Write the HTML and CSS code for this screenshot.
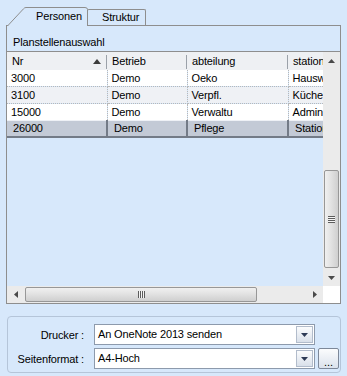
FILE: index.html
```html
<html>

<head>
  <title>Planstellenauswahl</title>
  <link rel="stylesheet" href="styles.css">
</head>

<body>

  <div class="tabs">
    <div class="tab active">
      <svg class="tab-shape" width="81" height="19" viewBox="0 0 81 19">
        <path d="M0.5,19 L16.5,1.8 Q17.5,0.5 19,0.5 L78,0.5 Q80.5,0.5 80.5,2.5 L80.5,19" fill="#d7e8fb" stroke="#8e8e8e"/>
      </svg>
      <span>Personen</span>
    </div>
    <div class="tab">Struktur</div>
  </div>

  <div class="panel">
    <div class="caption">Planstellenauswahl</div>
    <div class="grid">
      <div class="body">
        <table>
          <colgroup>
            <col style="width: 100px">
            <col style="width: 80px">
            <col style="width: 101px">
            <col style="width: 60px">
          </colgroup>
          <thead>
            <tr>
              <th>Nr
                <svg class="sort" width="8" height="5" viewBox="0 0 8 5"><path d="M0,5 L4,0 L8,5 Z" fill="#3c3c3c"/></svg>
              </th>
              <th>Betrieb</th>
              <th>abteilung</th>
              <th>station</th>
            </tr>
          </thead>
          <tbody>
            <tr><td>3000</td><td>Demo</td><td>Oeko</td><td>Hausw</td></tr>
            <tr class="alt"><td>3100</td><td>Demo</td><td>Verpfl.</td><td>Küche</td></tr>
            <tr><td>15000</td><td>Demo</td><td>Verwaltu</td><td>Admin</td></tr>
            <tr class="selected"><td>26000</td><td>Demo</td><td>Pflege</td><td>Station</td></tr>
          </tbody>
        </table>
      </div>

      <div class="vscroll">
        <div class="arrow">
          <svg width="7" height="4" viewBox="0 0 7 4"><path d="M0,4 L3.5,0 L7,4 Z" fill="#4a4a4a"/></svg>
        </div>
        <div class="vtrack">
          <div class="vthumb"><span class="grip-h"></span></div>
        </div>
        <div class="arrow">
          <svg width="7" height="4" viewBox="0 0 7 4"><path d="M0,0 L3.5,4 L7,0 Z" fill="#4a4a4a"/></svg>
        </div>
      </div>

      <div class="hscroll">
        <div class="arrow">
          <svg width="4" height="7" viewBox="0 0 4 7"><path d="M4,0 L0,3.5 L4,7 Z" fill="#4a4a4a"/></svg>
        </div>
        <div class="htrack">
          <div class="hthumb"><span class="grip-v"></span></div>
        </div>
        <div class="arrow">
          <svg width="4" height="7" viewBox="0 0 4 7"><path d="M0,0 L4,3.5 L0,7 Z" fill="#4a4a4a"/></svg>
        </div>
      </div>

      <div class="corner"></div>
    </div>
  </div>

  <div class="group">
    <div class="field">
      <label>Drucker :</label>
      <div class="combo">
        <span class="value">An OneNote 2013 senden</span>
        <span class="drop"><svg width="7" height="4" viewBox="0 0 7 4"><path d="M0,0 L3.5,4 L7,0 Z" fill="#2d3a55"/></svg></span>
      </div>
    </div>
    <div class="field">
      <label>Seitenformat :</label>
      <div class="combo">
        <span class="value">A4-Hoch</span>
        <span class="drop"><svg width="7" height="4" viewBox="0 0 7 4"><path d="M0,0 L3.5,4 L7,0 Z" fill="#2d3a55"/></svg></span>
      </div>
      <button class="more">...</button>
    </div>
  </div>

</body>

</html>
```

FILE: styles.css
```css
body {
  margin: 0;
  background-color: #d7e8fb;
  font-family: "Liberation Sans", Arial, sans-serif;
  font-size: 11px;
  letter-spacing: -0.15px;
  color: #000;
}

.tabs {
  display: flex;
  align-items: flex-end;
  padding-top: 7px;
  margin-bottom: -1px;
}

.tab {
  position: relative;
  box-sizing: border-box;
  height: 16px;
  width: 59px;
  margin-left: -1px;
  margin-bottom: 1px;
  padding-left: 14px;
  line-height: 15px;
  border: 1px solid #8e8e8e;
  border-bottom: none;
  border-radius: 2px 2px 0 0;
}

.tab.active {
  width: 81px;
  height: 19px;
  margin-left: 7px;
  margin-bottom: 0;
  padding-left: 29px;
  padding-top: 2px;
  line-height: 14px;
  border: none;
  z-index: 1;
}

.tab-shape {
  position: absolute;
  left: 0;
  top: 0;
}

.tab span {
  position: relative;
}

.panel {
  margin: 0 6px;
  border: 1px solid #8e8e8e;
}

.caption {
  height: 25px;
  box-sizing: border-box;
  padding: 8px 0 0 6px;
  line-height: 16px;
}

.grid {
  display: grid;
  grid-template-columns: 316px 17px;
  grid-template-rows: 234px 17px;
  border-top: 1px solid #8e8e8e;
}

.body {
  overflow: hidden;
}

table {
  border-collapse: collapse;
  table-layout: fixed;
  width: 341px;
  font: inherit;
  letter-spacing: inherit;
}

th {
  height: 18px;
  padding: 1px 0 0 5px;
  text-align: left;
  font-weight: normal;
  line-height: 17px;
  white-space: nowrap;
  overflow: hidden;
  background: linear-gradient(#9ba1a9, #9ba1a9) right 0 bottom 1px / 1px 14px no-repeat, #eef0f3;
}

.sort {
  float: right;
  margin: 6px 6px 0 0;
}

td {
  height: 16px;
  padding: 0 0 0 4px;
  line-height: 16px;
  white-space: nowrap;
  overflow: hidden;
  background-color: #fff;
  border-bottom: 1px dotted #b8b8b8;
  border-right: 1px dotted #b8b8b8;
}

.alt td {
  background-color: #eff1f5;
}

.selected td {
  height: 15px;
  line-height: 15px;
  padding-left: 6px;
  background-color: #c3cad6;
  border-top: 1px solid #eef1f6;
  border-bottom: 2px solid #737b87;
  border-right: 2px solid #737b87;
}

.vscroll {
  display: flex;
  flex-direction: column;
  background-color: #ebebeb;
}

.arrow {
  display: flex;
  align-items: center;
  justify-content: center;
  flex: 0 0 17px;
  height: 17px;
}

.vtrack {
  flex: 1;
  padding-top: 101px;
}

.vthumb {
  box-sizing: border-box;
  height: 98px;
  margin: 0 1px;
  border: 1px solid #979797;
  border-radius: 2px;
  background: linear-gradient(to right, #f0f0f0, #e2e2e2 45%, #cfcfcf);
  display: flex;
  align-items: center;
  justify-content: center;
}

.grip-h {
  width: 7px;
  height: 7px;
  background: repeating-linear-gradient(#5c5c5c 0 1px, #f4f4f4 1px 2px);
}

.hscroll {
  display: flex;
  background-color: #ebebeb;
}

.htrack {
  flex: 1;
  padding-left: 1px;
}

.hthumb {
  box-sizing: border-box;
  width: 232px;
  height: 15px;
  margin-top: 1px;
  border: 1px solid #979797;
  border-radius: 2px;
  background: linear-gradient(#f0f0f0, #e2e2e2 45%, #cfcfcf);
  display: flex;
  align-items: center;
  justify-content: center;
}

.grip-v {
  width: 7px;
  height: 7px;
  background: repeating-linear-gradient(to right, #5c5c5c 0 1px, #f4f4f4 1px 2px);
}

.corner {
  background-color: #fff;
}

.group {
  margin: 12px 6px 0 7px;
  height: 57px;
  box-sizing: border-box;
  padding-top: 7px;
  border: 1px solid #b5c5d9;
  border-radius: 4px;
}

.field {
  display: flex;
  align-items: center;
  margin-bottom: 3px;
}

.field label {
  width: 76px;
  margin-right: 10px;
  text-align: right;
}

.combo {
  display: flex;
  box-sizing: border-box;
  width: 221px;
  height: 21px;
  padding: 1px;
  background-color: #fff;
  border: 1px solid #8d9aac;
}

.value {
  flex: 1;
  padding-left: 2px;
  line-height: 17px;
}

.drop {
  display: flex;
  align-items: center;
  justify-content: center;
  width: 15px;
  border: 1px solid #b2bccb;
  background: linear-gradient(#fbfcfd, #d9e0ea);
}

.more {
  box-sizing: border-box;
  width: 21px;
  height: 21px;
  margin-left: 3px;
  padding: 6px 0 0;
  border: 1px solid #7d8899;
  border-radius: 2px;
  background: linear-gradient(#fbfcfd, #dbe2ec);
  font: 11px "Liberation Sans", Arial, sans-serif;
  line-height: 10px;
}
```
